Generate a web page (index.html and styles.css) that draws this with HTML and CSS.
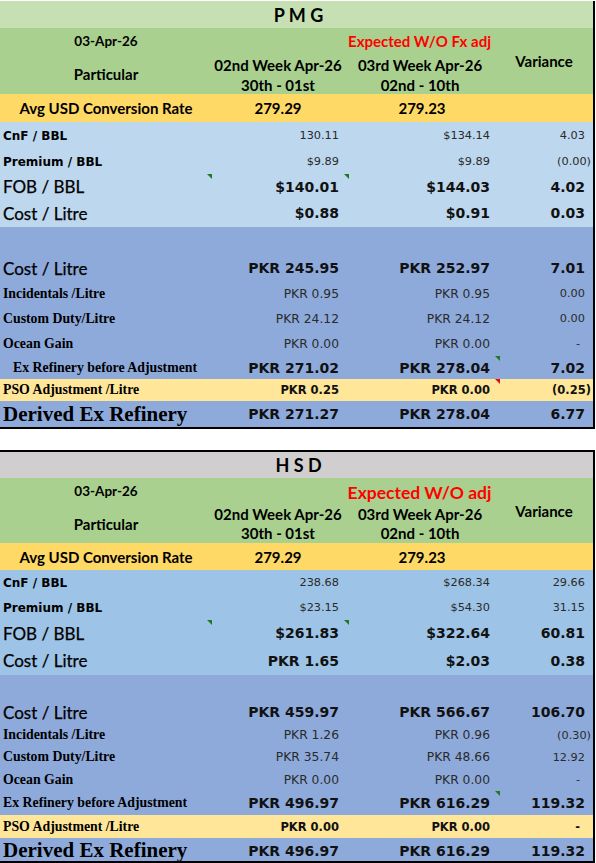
FILE: index.html
```html
<!DOCTYPE html>
<html>
<head>
<meta charset="utf-8">
<link rel="stylesheet" href="styles.css">
</head>
<body>
<div class="sheet pmg">
  <div class="title t-green">P M G</div>
  <div class="head h1">
    <div class="hc h-date">03-Apr-26</div>
    <div class="hc h-part">Particular</div>
    <div class="hc h-exp">Expected W/O Fx adj</div>
    <div class="hc h-w2">02nd Week Apr-26</div>
    <div class="hc h-w2b">30th - 01st</div>
    <div class="hc h-w3">03rd Week Apr-26</div>
    <div class="hc h-w3b">02nd - 10th</div>
    <div class="hc h-var">Variance</div>
  </div>
  <div class="row avg h28"><div class="c c1 ctr">Avg USD Conversion Rate</div><div class="c c2 ctr">279.29</div><div class="c c3 ctr">279.23</div><div class="c c4"></div></div>
  <div class="row lb h27"><div class="c c1 lbl-s">CnF / BBL</div><div class="c c2 n v-s">130.11</div><div class="c c3 n v-s">$134.14</div><div class="c c4 n v-s">4.03</div></div>
  <div class="row lb h25"><div class="c c1 lbl-s">Premium / BBL</div><div class="c c2 n v-s">$9.89</div><div class="c c3 n v-s">$9.89</div><div class="c c4 n neg v-s">(0.00)</div></div>
  <div class="row lb h25"><div class="c c1 lbl-m"><span class="tri"></span>FOB / BBL</div><div class="c c2 n v-b"><span class="tri"></span>$140.01</div><div class="c c3 n v-b">$144.03</div><div class="c c4 n v-b">4.02</div></div>
  <div class="row lb h28"><div class="c c1 lbl-m">Cost / Litre</div><div class="c c2 n v-b">$0.88</div><div class="c c3 n v-b">$0.91</div><div class="c c4 n v-b">0.03</div></div>
  <div class="row db h28"><div class="c c1"></div><div class="c c2"></div><div class="c c3"></div><div class="c c4"></div></div>
  <div class="row db h26"><div class="c c1 lbl-m">Cost / Litre</div><div class="c c2 n v-b">PKR 245.95</div><div class="c c3 n v-b">PKR 252.97</div><div class="c c4 n v-b">7.01</div></div>
  <div class="row db h25"><div class="c c1 lbl-serif">Incidentals /Litre</div><div class="c c2 n v-r">PKR 0.95</div><div class="c c3 n v-r">PKR 0.95</div><div class="c c4 n v-s">0.00</div></div>
  <div class="row db h25"><div class="c c1 lbl-serif">Custom Duty/Litre</div><div class="c c2 n v-r">PKR 24.12</div><div class="c c3 n v-r">PKR 24.12</div><div class="c c4 n v-s">0.00</div></div>
  <div class="row db h25"><div class="c c1 lbl-serif">Ocean Gain</div><div class="c c2 n v-r">PKR 0.00</div><div class="c c3 n v-r">PKR 0.00</div><div class="c c4 n dash v-s">-</div></div>
  <div class="row db h23"><div class="c c1 lbl-serif indent">Ex Refinery before Adjustment</div><div class="c c2 n v-b">PKR 271.02</div><div class="c c3 n v-b"><span class="tri"></span>PKR 278.04</div><div class="c c4 n v-b">7.02</div></div>
  <div class="row pso h22"><div class="c c1 lbl-serif">PSO Adjustment /Litre</div><div class="c c2 n v-m">PKR 0.25</div><div class="c c3 n v-m"><span class="tri red"></span>PKR 0.00</div><div class="c c4 n neg v-m">(0.25)</div></div>
  <div class="row db h26"><div class="c c1 lbl-big">Derived Ex Refinery</div><div class="c c2 n v-b">PKR 271.27</div><div class="c c3 n v-b">PKR 278.04</div><div class="c c4 n v-b">6.77</div></div>
</div>

<div class="sheet hsd">
  <div class="title t-gray h26">H S D</div>
  <div class="head h2">
    <div class="hc h-date">03-Apr-26</div>
    <div class="hc h-part">Particular</div>
    <div class="hc h-exp big">Expected W/O adj</div>
    <div class="hc h-w2">02nd Week Apr-26</div>
    <div class="hc h-w2b">30th - 01st</div>
    <div class="hc h-w3">03rd Week Apr-26</div>
    <div class="hc h-w3b">02nd - 10th</div>
    <div class="hc h-var">Variance</div>
  </div>
  <div class="row avg h27"><div class="c c1 ctr">Avg USD Conversion Rate</div><div class="c c2 ctr">279.29</div><div class="c c3 ctr">279.23</div><div class="c c4"></div></div>
  <div class="row lb2 h25"><div class="c c1 lbl-s">CnF / BBL</div><div class="c c2 n v-s">238.68</div><div class="c c3 n v-s">$268.34</div><div class="c c4 n v-s">29.66</div></div>
  <div class="row lb2 h25"><div class="c c1 lbl-s">Premium / BBL</div><div class="c c2 n v-s">$23.15</div><div class="c c3 n v-s">$54.30</div><div class="c c4 n v-s">31.15</div></div>
  <div class="row lb2 h26"><div class="c c1 lbl-m"><span class="tri"></span>FOB / BBL</div><div class="c c2 n v-b"><span class="tri"></span>$261.83</div><div class="c c3 n v-b">$322.64</div><div class="c c4 n v-b">60.81</div></div>
  <div class="row lb2 h29"><div class="c c1 lbl-m">Cost / Litre</div><div class="c c2 n v-b">PKR 1.65</div><div class="c c3 n v-b">$2.03</div><div class="c c4 n v-b">0.38</div></div>
  <div class="row db h25"><div class="c c1"></div><div class="c c2"></div><div class="c c3"></div><div class="c c4"></div></div>
  <div class="row db h24"><div class="c c1 lbl-m">Cost / Litre</div><div class="c c2 n v-b">PKR 459.97</div><div class="c c3 n v-b">PKR 566.67</div><div class="c c4 n v-b">106.70</div></div>
  <div class="row db h22"><div class="c c1 lbl-serif">Incidentals /Litre</div><div class="c c2 n v-r">PKR 1.26</div><div class="c c3 n v-r">PKR 0.96</div><div class="c c4 n neg v-s">(0.30)</div></div>
  <div class="row db h22"><div class="c c1 lbl-serif">Custom Duty/Litre</div><div class="c c2 n v-r">PKR 35.74</div><div class="c c3 n v-r">PKR 48.66</div><div class="c c4 n v-s">12.92</div></div>
  <div class="row db h23"><div class="c c1 lbl-serif">Ocean Gain</div><div class="c c2 n v-r">PKR 0.00</div><div class="c c3 n v-r">PKR 0.00</div><div class="c c4 n dash v-s">-</div></div>
  <div class="row db h24"><div class="c c1 lbl-serif">Ex Refinery before Adjustment</div><div class="c c2 n v-b">PKR 496.97</div><div class="c c3 n v-b"><span class="tri"></span>PKR 616.29</div><div class="c c4 n v-b">119.32</div></div>
  <div class="row pso h23"><div class="c c1 lbl-serif">PSO Adjustment /Litre</div><div class="c c2 n v-m">PKR 0.00</div><div class="c c3 n v-m">PKR 0.00</div><div class="c c4 n dash v-m">-</div></div>
  <div class="row db h23"><div class="c c1 lbl-big">Derived Ex Refinery</div><div class="c c2 n v-b">PKR 496.97</div><div class="c c3 n v-b">PKR 616.29</div><div class="c c4 n v-b">119.32</div></div>
</div>
</body>
</html>
```

FILE: styles.css
```css
html, body {
  margin: 0;
  padding: 0;
  background: #ffffff;
}

body {
  font-family: "Lato", "Liberation Sans", sans-serif;
  color: #000;
}

.sheet {
  width: 593px;
  border-right: 2px solid #000;
  border-bottom: 2px solid #000;
}

.pmg {
  margin-top: 1px;
}

.hsd {
  margin-top: 21px;
  border-top: 2px solid #000;
}

.title {
  height: 27px;
  display: flex;
  align-items: center;
  justify-content: center;
  font-weight: 700;
  font-size: 18px;
  padding-left: 4px;
}

.t-green { background: #c6e0b4; }
.t-gray { background: #d0cece; }

.head {
  display: grid;
  grid-template-columns: 212px 137px 151px 93px;
  background: #a9d08e;
  font-weight: 700;
  font-size: 15px;
}

.h1 { grid-template-rows: 26px 22px 18px; }
.h2 { grid-template-rows: 26px 19px 20px; }

.hc {
  display: flex;
  align-items: center;
  justify-content: center;
  white-space: nowrap;
}

.h-date { grid-column: 1; grid-row: 1; font-size: 13.5px; }
.h-part { grid-column: 1; grid-row: 2 / 4; }
.h-exp { grid-column: 3; grid-row: 1; color: #ff0000; padding-right: 10px; }
.h-exp.big { font-size: 17.5px; padding-top: 2px; }
.h-w2 { grid-column: 2; grid-row: 2; padding-right: 5px; }
.h-w2b { grid-column: 2; grid-row: 3; padding-right: 5px; }
.h-w3 { grid-column: 3; grid-row: 2; padding-right: 9px; }
.h-w3b { grid-column: 3; grid-row: 3; padding-right: 9px; }
.h-var { grid-column: 4; grid-row: 1 / 4; padding-right: 5px; }

.row {
  display: grid;
  grid-template-columns: 212px 137px 151px 93px;
}

.h22 { height: 22px; }
.h23 { height: 23px; }
.h24 { height: 24px; }
.h25 { height: 25px; }
.h26 { height: 26px; }
.h27 { height: 27px; }
.h28 { height: 28px; }
.h29 { height: 29px; }

.avg { background: #ffd966; font-weight: 700; font-size: 15px; }
.lb { background: #bdd7ee; }
.lb2 { background: #9dc3e6; }
.db { background: #8eaadb; }
.pso { background: #ffe699; }

.c {
  position: relative;
  display: flex;
  align-items: center;
  white-space: nowrap;
}

.c1 { padding-left: 3px; }
.ctr { justify-content: center; padding-left: 0; }
.c2.ctr, .c3.ctr { padding-right: 5px; }

.n { justify-content: flex-end; }
.c2.n { padding-right: 10px; }
.c3.n { padding-right: 10px; }
.c4.n { padding-right: 8px; }
.c4.neg { padding-right: 2px; }
.c4.dash { padding-right: 13px; }

.lbl-s {
  font-family: "DejaVu Sans", sans-serif;
  font-weight: 700;
  font-size: 12px;
}

.lbl-m {
  font-size: 17px;
  font-weight: 400;
  color: #000;
  -webkit-text-stroke: 0.25px #000;
}

.lbl-serif {
  font-family: "Liberation Serif", serif;
  font-weight: 700;
  font-size: 13.8px;
}

.indent { padding-left: 13px; }

.lbl-big {
  font-family: "Liberation Serif", serif;
  font-weight: 700;
  font-size: 21px;
}

.v-s {
  font-family: "DejaVu Sans", sans-serif;
  font-size: 11.3px;
  color: #2a2a2a;
}

.v-r {
  font-family: "DejaVu Sans", sans-serif;
  font-size: 12.3px;
  color: #2a2a2a;
}

.v-b {
  font-family: "DejaVu Sans", sans-serif;
  font-weight: 700;
  font-size: 14px;
  color: #111;
}

.v-m {
  font-family: "DejaVu Sans", sans-serif;
  font-weight: 700;
  font-size: 11.5px;
  color: #111;
}

.tri {
  position: absolute;
  top: 0;
  right: 0;
  width: 5px;
  height: 5px;
  background: #1f7a1f;
  clip-path: polygon(0 0, 100% 0, 100% 100%);
}

.tri.red {
  background: #e01010;
}
```
